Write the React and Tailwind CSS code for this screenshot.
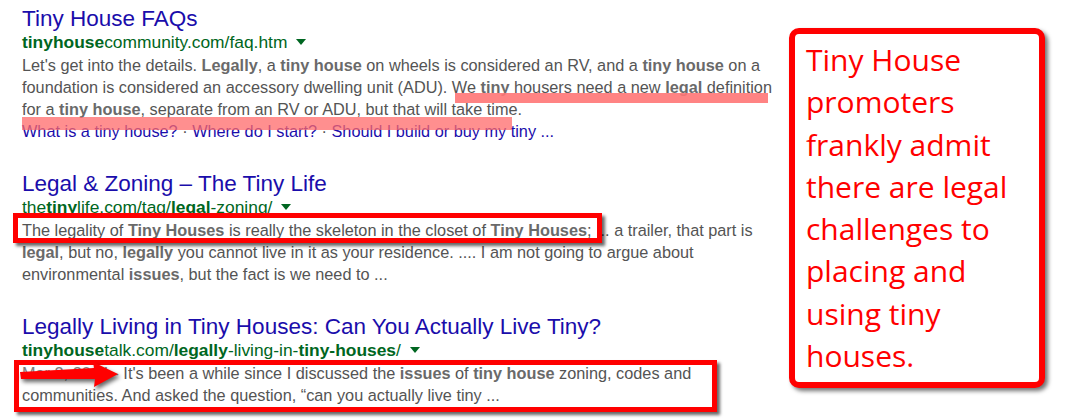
import React from "react";

const B = ({ children }) => <b className="font-bold text-[#6a6a6a]">{children}</b>;
const G = ({ children }) => <b className="font-bold">{children}</b>;

function Caret() {
  return (
    <svg width="10" height="6" viewBox="0 0 10 6" className="inline-block ml-[9px] align-middle mb-[2px]">
      <path d="M0 0h10L5 6z" fill="#006621" />
    </svg>
  );
}

function Title({ children }) {
  return <div className="text-[22.5px] leading-[24px] text-[#1a0dab] whitespace-nowrap">{children}</div>;
}

function Url({ children }) {
  return (
    <div className="text-[17.4px] leading-[23px] text-[#006621] whitespace-nowrap">
      {children}
      <Caret />
    </div>
  );
}

function Line({ children, color = "text-[#545454]" }) {
  return <div className={"text-[16.3px] leading-[22px] whitespace-nowrap " + color}>{children}</div>;
}

export default function App() {
  return (
    <div className="flex w-[1078px] h-[419px] bg-white overflow-hidden font-['Liberation_Sans',Arial,sans-serif]">
      <div className="w-[789px] shrink-0 pl-[22px] pt-[7px]">
        {/* Result 1 */}
        <div className="relative">
          <Title>Tiny House FAQs</Title>
          <Url>
            <G>tinyhouse</G>community.com/faq.htm
          </Url>
          <Line>
            Let's get into the details. <B>Legally</B>, a <B>tiny house</B> on wheels is considered an RV, and a <B>tiny house</B> on a
          </Line>
          <Line>
            foundation is considered an accessory dwelling unit (ADU). We <B>tiny</B> housers need a new <B>legal</B> definition
          </Line>
          <Line>
            for a <B>tiny house</B>, separate from an RV or ADU, but that will take time.
          </Line>
          <Line color="text-[#1a0dab]">
            What is a tiny house?<span className="text-[#545454]"> · </span>Where do I start?<span className="text-[#545454]"> · </span>Should I build or buy my tiny ...
          </Line>
          <div className="absolute left-[433px] top-[86px] w-[313px] h-[10px] bg-[#ff7676]/90" />
          <div className="absolute left-0 top-[110px] w-[490px] h-[13px] bg-[#ff6a6a]/75" />
        </div>

        {/* Result 2 */}
        <div className="mt-[30px]">
          <Title>Legal &amp; Zoning – The Tiny Life</Title>
          <Url>
            the<G>tiny</G>life.com/tag/<G>legal</G>-zoning/
          </Url>
          <div className="relative">
            <Line>
              The legality of <B>Tiny Houses</B> is really the skeleton in the closet of <B>Tiny Houses</B>; ... a trailer, that part is
            </Line>
            <div className="absolute left-[-9px] top-[-6px] w-[589px] h-[30px] border-[5px] border-[#ff0000] shadow-[3px_3px_3px_rgba(0,0,0,0.6)]" />
          </div>
          <Line>
            <B>legal</B>, but no, <B>legally</B> you cannot live in it as your residence. .... I am not going to argue about
          </Line>
          <Line>
            environmental <B>issues</B>, but the fact is we need to ...
          </Line>
        </div>

        {/* Result 3 */}
        <div className="mt-[30px]">
          <Title>Legally Living in Tiny Houses: Can You Actually Live Tiny?</Title>
          <Url>
            <G>tinyhouse</G>talk.com/<G>legally</G>-living-in-<G>tiny-houses</G>/
          </Url>
          <div className="relative">
            <Line>
              <span className="text-[#808080]">Mar 2, 2014 - </span>It's been a while since I discussed the <B>issues</B> of <B>tiny house</B> zoning, codes and
            </Line>
            <Line>communities. And asked the question, “can you actually live tiny ...</Line>
            <div className="absolute left-[-8px] top-[-2px] w-[703px] h-[52px] border-[5px] border-[#ff0000] shadow-[3px_3px_3px_rgba(0,0,0,0.6)]" />
            <svg
              width="100"
              height="28"
              viewBox="0 0 100 28"
              className="absolute left-[-2px] top-[-1px] drop-shadow-[2px_3px_2px_rgba(0,0,0,0.6)]"
            >
              <path d="M0 11 L74 7 L73 1 L98 13 L74 26 L75 18 L1 18 Z" fill="#ff0000" />
            </svg>
          </div>
        </div>
      </div>

      <div className="pt-[28px]">
        <div className="w-[256px] h-[360px] border-[6px] border-[#ff0000] rounded-[10px] shadow-[3px_3px_4px_rgba(0,0,0,0.55)] bg-white pl-[11px] pt-[5px] text-[#ff0000] text-[30px] leading-[42.3px] font-['Open_Sans',sans-serif] whitespace-nowrap">
          <div>Tiny House</div>
          <div>promoters</div>
          <div>frankly admit</div>
          <div>there are legal</div>
          <div>challenges to</div>
          <div>placing and</div>
          <div>using tiny</div>
          <div>houses.</div>
        </div>
      </div>
    </div>
  );
}
